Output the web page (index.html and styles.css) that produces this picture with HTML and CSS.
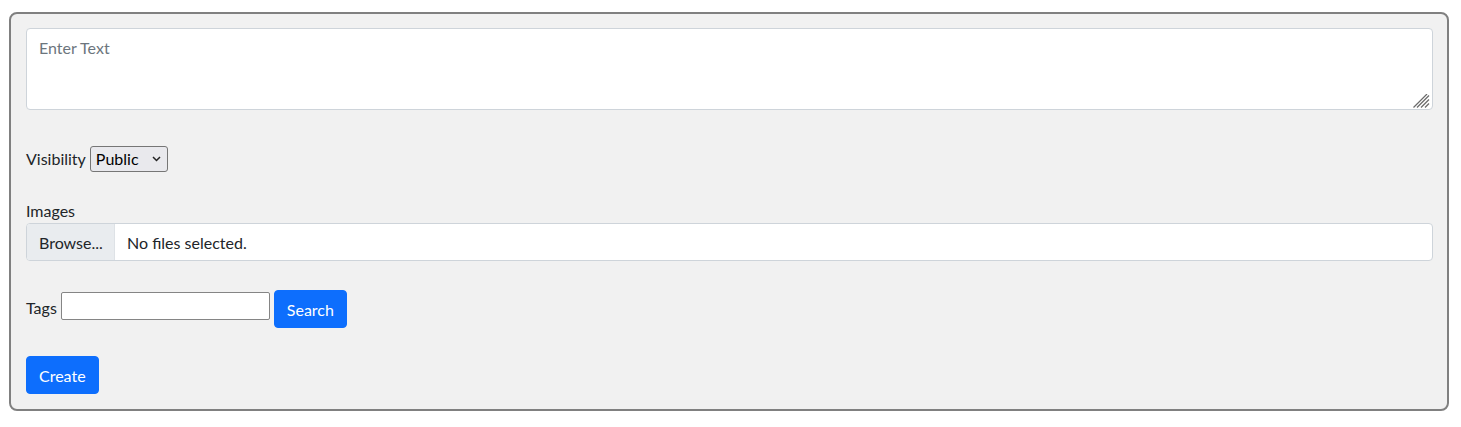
FILE: index.html
```html
<!DOCTYPE html>
<html>
<head>
<meta charset="utf-8">
<link rel="stylesheet" href="styles.css">
</head>
<body>
<form class="panel">
  <div class="ta-wrap">
    <textarea class="ta" placeholder="Enter Text"></textarea>
    <svg class="grip" width="18" height="14" viewBox="0 0 18 14">
      <g stroke="#6b6b6b" stroke-width="1.2">
        <line x1="0.5" y1="13.5" x2="14" y2="0"/>
        <line x1="4" y1="13.5" x2="16" y2="1.5"/>
        <line x1="8" y1="13.5" x2="16" y2="5.5"/>
        <line x1="12" y1="13.5" x2="16" y2="9.5"/>
      </g>
    </svg>
  </div>

  <div class="row vis-row">
    <label class="lbl">Visibility</label>
    <div class="sel-wrap">
      <select class="sel"><option>Public</option><option>Private</option></select>
      <svg class="chev" width="9" height="6" viewBox="0 0 9 6"><path d="M1 1l3.5 3.5L8 1" fill="none" stroke="#222" stroke-width="1.5"/></svg>
    </div>
  </div>

  <div class="images">
    <div class="lbl img-lbl">Images</div>
    <div class="file">
      <span class="browse">Browse...</span>
      <span class="fname">No files selected.</span>
    </div>
  </div>

  <div class="row tags-row">
    <label class="lbl tags-lbl">Tags</label>
    <input class="tags" type="text">
    <button type="button" class="btn">Search</button>
  </div>

  <div class="create-row">
    <button type="button" class="btn">Create</button>
  </div>
</form>
</body>
</html>
```
FILE: styles.css
```css
html, body {
  margin: 0;
  padding: 0;
  background: #ffffff;
}
body {
  font-family: "Segoe UI", Lato, "Noto Sans", sans-serif;
  font-size: 16px;
  color: #212529;
}
.panel {
  margin: 12px 12px 0 9px;
  border: 2px solid #808080;
  border-radius: 8px;
  background: #f1f1f1;
  padding: 14px 14px 15px 15px;
  display: flex;
  flex-direction: column;
}
.ta-wrap {
  position: relative;
  height: 82px;
}
.ta {
  display: block;
  box-sizing: border-box;
  width: 100%;
  height: 82px;
  border: 1px solid #ced4da;
  border-radius: 4px;
  background: #fff;
  padding: 9px 12px;
  font: inherit;
  resize: none;
  outline: none;
}
.ta::placeholder {
  color: #6c757d;
}
.grip {
  position: absolute;
  right: 2px;
  bottom: 2px;
}
.row {
  display: flex;
  align-items: center;
}
.vis-row {
  margin-top: 36px;
  height: 25px;
}
.lbl {
  line-height: 24px;
}
.sel-wrap {
  position: relative;
  margin-left: 4px;
}
.sel {
  appearance: none;
  -webkit-appearance: none;
  box-sizing: border-box;
  width: 78px;
  height: 26px;
  border: 1px solid #767676;
  border-radius: 3px;
  background: #e9e9ed;
  font: inherit;
  color: #000;
  padding: 0 0 0 5px;
  outline: none;
}
.chev {
  position: absolute;
  right: 7px;
  top: 10px;
  pointer-events: none;
}
.images {
  margin-top: 28px;
}
.img-lbl {
  height: 24px;
}
.file {
  display: flex;
  box-sizing: border-box;
  height: 38px;
  border: 1px solid #ced4da;
  border-radius: 4px;
  background: #fff;
  overflow: hidden;
}
.browse {
  display: flex;
  align-items: center;
  padding: 0 12px;
  background: #e9ecef;
  border-right: 1px solid #dee2e6;
  width: 63px;
}
.fname {
  display: flex;
  align-items: center;
  padding-left: 12px;
}
.tags-row {
  margin-top: 29px;
  height: 38px;
  align-items: flex-start;
}
.tags-lbl {
  margin-top: 6px;
}
.tags {
  box-sizing: border-box;
  margin-left: 4px;
  margin-top: 2px;
  width: 209px;
  height: 28px;
  border: 1px solid #858585;
  border-radius: 2px;
  background: #fff;
  font: inherit;
  outline: none;
}
.btn {
  box-sizing: border-box;
  height: 38px;
  padding: 0 12px;
  margin-left: 4px;
  border: 1px solid #0d6efd;
  border-radius: 4px;
  background: #0d6efd;
  color: #fff;
  font: inherit;
}
.create-row {
  margin-top: 28px;
  display: flex;
}
.create-row .btn {
  margin-left: 0;
}
```
